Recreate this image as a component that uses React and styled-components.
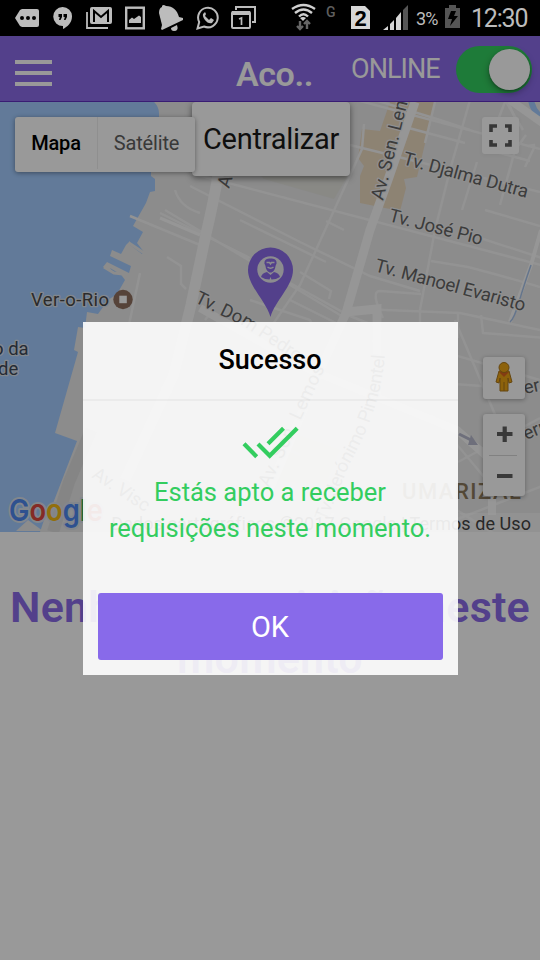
import React from 'react';
import styled, { createGlobalStyle } from 'styled-components';

const GlobalStyle = createGlobalStyle`
  * { box-sizing: border-box; }
  body { margin: 0; background: #fff; font-family: Roboto, sans-serif; overflow: hidden; }
  button { font-family: inherit; border: 0; padding: 0; margin: 0; }
`;

const Screen = styled.main`
  position: relative;
  width: 540px;
  height: 960px;
  display: flex;
  flex-direction: column;
  background: #fff;
  overflow: hidden;
`;
const StatusBar = styled.div`
  height: 36px;
  flex: none;
  display: flex;
  align-items: center;
  background: #000;
  color: #bcbcbc;
`;
const StatusIcon = styled.svg`
  display: block;
  flex: none;
  width: ${p => p.$w}px;
  height: 36px;
  margin-left: ${p => p.$gap}px;
`;
const StatusText = styled.span`
  flex: none;
  width: ${p => p.$w}px;
  margin-left: ${p => p.$gap}px;
  font-size: ${p => p.$size}px;
  line-height: 36px;
  letter-spacing: ${p => p.$ls || 0}px;
  white-space: nowrap;
  padding-top: 1px;
`;
const Page = styled.div`
  flex: 1;
  position: relative;
  display: flex;
  flex-direction: column;
`;
const Header = styled.header`
  height: 66px;
  flex: none;
  display: grid;
  grid-template-columns: 216px 120px 120px 76px;
  align-items: center;
  background: #8a6be8;
  border-bottom: 1px solid #6030c0;
  color: #fff;
`;
const MenuButton = styled.button`
  width: 37px;
  height: 26px;
  margin: 9px 0 0 15px;
  display: flex;
  flex-direction: column;
  justify-content: space-between;
  background: none;
`;
const MenuLine = styled.span`
  width: 37px;
  height: 4px;
  background: #fff;
`;
const Title = styled.h1`
  margin: 11px 0 0 20px;
  font-size: 34px;
  line-height: 40px;
  font-weight: 600;
  letter-spacing: -0.4px;
  white-space: nowrap;
`;
const OnlineLabel = styled.span`
  padding-left: 15px;
  font-size: 27px;
  line-height: 36px;
  letter-spacing: -0.95px;
`;
const Toggle = styled.div`
  width: 76px;
  height: 47px;
  padding: 3px 2px 3px 3px;
  margin-top: 1px;
  display: flex;
  justify-content: flex-end;
  border-radius: 24px;
  background: #33cd5f;
`;
const Knob = styled.span`
  width: 41px;
  height: 41px;
  border-radius: 50%;
  background: #fff;
  box-shadow: 0 3px 7px rgba(0,0,0,.35), 0 1px 2px rgba(0,0,0,.25);
`;
const MapArea = styled.section`
  position: relative;
  height: 430px;
  flex: none;
  overflow: hidden;
`;
const MapDrawing = styled.svg`
  display: block;
  width: 540px;
  height: 430px;
  font-family: Roboto, sans-serif;
`;
const CenterButton = styled.button`
  position: absolute;
  left: 192px;
  top: 0;
  width: 158px;
  height: 74px;
  border-radius: 4px;
  background: #fff;
  color: #191919;
  font-size: 29px;
  letter-spacing: -0.25px;
  box-shadow: 0 2px 6px rgba(0,0,0,.5);
`;
const MapTypes = styled.div`
  position: absolute;
  left: 15px;
  top: 15px;
  height: 55px;
  display: flex;
  border-radius: 3px;
  background: #fff;
  box-shadow: 0 1px 5px rgba(0,0,0,.4);
`;
const MapType = styled.button`
  width: ${p => (p.$active ? 82 : 98)}px;
  height: 52px;
  border-left: ${p => (p.$active ? 0 : 1)}px solid #eee;
  background: none;
  color: ${p => (p.$active ? '#000' : '#606060')};
  font-size: 20px;
  letter-spacing: -0.15px;
  font-weight: ${p => (p.$active ? 500 : 400)};
`;
const MapControl = styled.div`
  position: absolute;
  left: ${p => p.$x}px;
  top: ${p => p.$y}px;
  width: ${p => p.$w}px;
  height: ${p => p.$h}px;
  border-radius: 3px;
  background: #fff;
  box-shadow: 0 1px 4px rgba(0,0,0,${p => p.$shade || 0.3});
  svg { display: block; width: 100%; height: 100%; }
`;
const Terms = styled.div`
  position: absolute;
  right: 0;
  bottom: 0;
  height: 19px;
  padding: 0 9px 0 8px;
  background: rgba(255,255,255,.5);
  color: #444;
  font-size: 18px;
  line-height: 21px;
  letter-spacing: 0.06px;
  white-space: nowrap;
`;
const EmptyText = styled.h2`
  margin: 50px -10px 0;
  text-align: center;
  font-size: 43px;
  line-height: 51px;
  font-weight: 600;
  letter-spacing: 0.2px;
  color: #8a6be8;
`;
const Backdrop = styled.div`
  position: absolute;
  inset: 0;
  display: flex;
  align-items: flex-start;
  justify-content: center;
  padding-top: 286px;
  background: rgba(0,0,0,.4);
`;
const Popup = styled.div`
  width: 375px;
  height: 353px;
  display: flex;
  flex-direction: column;
  background: rgba(255,255,255,.9);
`;
const PopupHead = styled.h3`
  margin: 0;
  height: 79px;
  border-bottom: 2px solid rgba(0,0,0,.035);
  text-align: center;
  font-size: 27px;
  line-height: 77px;
  font-weight: 500;
  color: #000;
`;
const PopupBody = styled.div`
  height: 192px;
  padding-top: 23px;
  display: flex;
  flex-direction: column;
  align-items: center;
  color: #33cd5f;
`;
const Message = styled.p`
  margin: 14px 0 0;
  text-align: center;
  font-size: 25.5px;
  line-height: 36px;
  white-space: nowrap;
`;
const CheckIcon = styled.svg`
  width: 58px;
  height: 36px;
  flex: none;
  overflow: visible;
`;
const OkButton = styled.button`
  width: 345px;
  height: 67px;
  margin-left: 15px;
  border-radius: 3px;
  background: #886aea;
  color: #fff;
  font-size: 29px;
  line-height: 64px;
`;

const minorRoads = [
  'M190 173 L560 270', 'M330 93 L540 149', 'M350 145 L540 192', 'M190 186 L300 242 L370 276 L420 291',
  'M160 213 L250 258 M165 210 L345 318', 'M130 216 L200 245', 'M175 190 Q180 207 200 213',
  'M262 340 L300 285 L362 149 L364 124', 'M470 100 L450 170 L435 230 L420 310 L420 345',
  'M290 283 L350 316 L410 340', 'M290 300 L380 345', 'M320 345 L310 320 L250 300',
  'M240 220 L326 262', 'M300 272 L331 291 L329 299', 'M326 221 L344 230',
  'M375 100 L440 120 L470 130', 'M435 102 L425 143 M405 127 L465 143', 'M477 162 L462 210',
  'M431 261 L468 267 Q510 278 540 287', 'M485 210 L540 226', 'M480 238 L545 259',
  'M500 205 L515 150 L526 135', 'M525 167 L534 148 L534 145 L528 146', 'M505 100 L523 130 M485 149 L530 161',
  'M383 318 Q370 291 380 291 L421 294', 'M360 309 L460 313 L540 330', 'M458 312 L458 338 M481 315 L483 333 L560 339',
  'M505 102 L490 140', 'M508 102 L515 118', 'M167 257 L181 266 L181 284 L186 289',
  'M140 273 L130 320', 'M205 320 L213 310', 'M420 345 L540 380', 'M130 320 L105 430 L85 530',
  'M145 380 L300 455', 'M170 350 L330 430 L520 550', 'M145 455 L230 500', 'M250 360 L190 490',
  'M420 345 L428 410 L495 490', 'M455 320 L510 450', 'M458 462 L540 418', 'M455 520 L545 485',
  'M440 383 L540 390', 'M330 400 L430 450', 'M275 410 L235 520', 'M350 330 L365 430 L330 520'
];

const MapView = () => (
  <MapDrawing viewBox="0 102 540 430">
    <rect y="100" width="540" height="435" fill="#e9e9e9" />
    <path d="M362 129 L380 131 L390 102 L435 102 L417 177 L404 179 L406 188 L400 211 L360 203 L360 176 L364 166 L358 158Z" fill="#ecdac0" />
    <path d="M257 172 L350 172 L334 199 L264 179Z" fill="#e4e4de" />
    <path d="M290 432 L340 450 L325 485 L270 480Z" fill="#f3eadc" />
    <path d="M0 100H152Q159 106 159 113V150L151 172V176L155 179V191L150 192L146 203L133 226L143 232L137 243L144 252L142 254L130 245L130 241L126 245L121 254L112 250L110 256L131 266L129 273L107 262L103 267L112 271L110 268L120 274L119 272L125 280L117 294L108 300L98 314L87 312L85 328L78 327L74 350L78 352L55 433L77 441L52 506L44 520L40 532L0 532Z" fill="#a3ccff" />
    <path d="M28 520L43 531H16Z" fill="#e9e9e9" />
    <path d="M129 243L144 253 M104 267L114 273L123 274" fill="none" stroke="#e9e9e9" strokeWidth="3" />
    <path d="M91 430L69 482L53 532" fill="none" stroke="#dedede" strokeWidth="12" />
    <path d="M531 100Q533 111 541 117" fill="none" stroke="#a3ccff" strokeWidth="6" />
    <g fill="none" stroke="#f5f5f5" strokeWidth="2.5">
      {minorRoads.map(d => <path key={d} d={d} />)}
    </g>
    <g fill="none" stroke="#fafafa">
      <path d="M219 170 Q214 200 206 234 L191 305 L174 374 L125 480" strokeWidth="11" />
      <path d="M415 102 L388 180 L370 230 L346 313 L318 375 L265 500" strokeWidth="9" />
      <path d="M346 312 L377 309 L377 400" strokeWidth="9" />
      <path d="M510 100L545 125" strokeWidth="8" />
      <path d="M541 230L531 265 L510 322" strokeWidth="4" />
      <path d="M200 308 L310 370 L457 430 L492 461 L492 515" strokeWidth="8" />
      <path d="M160 218 L200 235" strokeWidth="3" />
    </g>
    <path d="M531 265Q524 285 519 302T510 322" fill="none" stroke="#a9c4ea" strokeWidth="1.5" />
    <path d="M459 434L473 441" stroke="#b8bacd" strokeWidth="3" />
    <path d="M471 435L478 445L468 445Z" fill="#b8bacd" />
    <g fontSize="18.5" fill="#646464" stroke="#efefef" strokeWidth="2.5" paintOrder="stroke" strokeLinejoin="round">
      <text textLength="129" transform="translate(402 164) rotate(15.2)">Tv. Djalma Dutra</text>
      <text textLength="96" transform="translate(388 221) rotate(14.5)">Tv. José Pio</text>
      <text textLength="155" transform="translate(374 271) rotate(15)">Tv. Manoel Evaristo</text>
      <text textLength="108" transform="translate(383 201) rotate(-76)">Av. Sen. Lem</text>
      <text transform="translate(229 189) rotate(-72)">Av. Dr. Freitas</text>
      <path id="dom" d="M194 302 L245 327 L330 384" fill="none" stroke="none" />
      <text><textPath href="#dom">Tv. Dom Pedro I</textPath></text>
      <text textLength="132" transform="translate(269 488) rotate(-65)">Av. Sen. Lemos</text>
      <path id="jeronimo" d="M326 522 L350 463 Q383 405 385 350" fill="none" stroke="none" />
      <text><textPath href="#jeronimo" textLength="178">Tv. Jerónimo Pimentel</textPath></text>
      <text transform="translate(91 477) rotate(33)">Av. Visc</text>
      <text transform="translate(525 394) rotate(-12)">ern</text>
      <text transform="translate(526 440) rotate(-22)">ern</text>
    </g>
    <text x="402" y="499" textLength="119" fontSize="22" fontWeight="500" fill="#8b795c">UMARIZAL</text>
    <g fontSize="18.5" fill="#3c4859" stroke="#d9e1eb" strokeWidth="2.5" paintOrder="stroke" strokeLinejoin="round">
      <text x="31" y="306" textLength="78" fill="#484848">Ver-o-Rio</text>
      <text x="-7" y="355">o da</text>
      <text x="-2" y="375">de</text>
    </g>
    <circle cx="123" cy="299.5" r="9.700" fill="#90705f" />
    <rect x="119.3" y="295.7" width="7.5" height="7.5" fill="#fff" />
    <g fontFamily="Inter, sans-serif" fontSize="30" fontWeight="600" stroke="#d9e1eb" strokeWidth="4" paintOrder="stroke" strokeLinejoin="round">
      <text x="9" y="521" textLength="94" lengthAdjust="spacingAndGlyphs">
        <tspan fill="#4d87ef">G</tspan><tspan fill="#dd493e">o</tspan><tspan fill="#f3b914">o</tspan><tspan fill="#4d87ef">g</tspan><tspan fill="#38a85a">l</tspan><tspan fill="#dd493e">e</tspan>
      </text>
    </g>
    <path d="M270.5 317C266 301 248 286 248 270A22.5 22.5 0 0 1 293 270C293 286 275 301 270.5 317Z" fill="#8a6be8" />
    <circle cx="270.5" cy="269.500" r="13.2" fill="#e9e9ef" />
    <g fill="#8a6be8">
      <path d="M264.5 263.500C264 259.500 267 258.500 270.5 258.500S277 259.500 276.500 263.500L275.500 266H265.500Z" />
      <path d="M265.500 266H275.500C275 270 273 272.500 270.5 272.500S266 270 265.500 266Z" />
      <path d="M261 277Q262 273 267 272L270.5 275L274 272Q279 273 280 277Q276 279.500 271.500 279.500L270.500 277L269.500 279.500Q265 279.500 261 277Z" />
    </g>
    <path d="M266.500 262.500H269.500L270.500 264L271.500 262.500H274.500M267.500 267Q270.500 269.500 273.500 267" fill="none" stroke="#e9e9ef" strokeWidth="1.4" />
  </MapDrawing>
);

const StatusIcons = () => (
  <StatusBar>
    <StatusIcon $w={24} $gap={15} viewBox="0 0 24 36"><path fill="#bcbcbc" d="M7 9H22Q24 9 24 11V25Q24 27 22 27H7L5 26L0 18L5 10Z" /><path d="M7 18h0M13 18h0M19 18h0" stroke="#000" strokeWidth="4" strokeLinecap="round" /></StatusIcon>
    <StatusIcon $w={19} $gap={14} viewBox="0 0 19 36"><path fill="#bcbcbc" d="M9.5 7A9.3 9.3 0 0 1 19 16.5C19 23 14 27 10 29V26A9.5 9.5 0 0 1 9.5 7Z" /><path fill="#000" d="M5.5 14H9V17L7.5 20H6L6.8 17H5.5ZM10.5 14H14V17L12.5 20H11L11.8 17H10.5Z" /></StatusIcon>
    <StatusIcon $w={26} $gap={14} viewBox="0 0 26 36"><path fill="none" stroke="#bcbcbc" strokeWidth="1.8" d="M1 12V28H22" /><rect x="4" y="7" width="22" height="17" rx="2" fill="#bcbcbc" /><path d="M8 22V11L15 17L22 11V22" fill="none" stroke="#000" strokeWidth="2" /></StatusIcon>
    <StatusIcon $w={20} $gap={13} viewBox="0 0 20 36"><rect x="1.2" y="7.700" width="17.600" height="20.600" stroke="#bcbcbc" strokeWidth="2.4" fill="#000" /><path d="M4 23V20L7 17.500L9 19L14 15.500L16 17V23Z" fill="#bcbcbc" /></StatusIcon>
    <StatusIcon $w={24} $gap={14} viewBox="0 0 24 36"><path fill="#bcbcbc" d="M3 6Q4 4 7 6C14 6 18 10 20 17L24 18V20L3 30L2 29L3 25L0 13Q0 8 3 7ZM12 28L18 25Q20 31 15 31Q12 31 12 28Z" /></StatusIcon>
    <StatusIcon $w={23} $gap={13} viewBox="0 0 23 36"><path d="M1.500 28.500L3.200 22A9.8 9.8 0 1 1 8 26.500Z" fill="none" stroke="#bcbcbc" strokeWidth="2" /><path d="M9 12L7 14C6 18 12 25 16 23L18 20L15 18L13 20L9 16L10 14Z" fill="#bcbcbc" /></StatusIcon>
    <StatusIcon $w={25} $gap={12} viewBox="0 0 25 36"><path d="M5 10V7H24V22H21" fill="none" stroke="#bcbcbc" strokeWidth="2" /><rect x="1" y="12" width="18" height="16" rx="1" fill="none" stroke="#bcbcbc" strokeWidth="2" /><path d="M1 13H19" stroke="#bcbcbc" strokeWidth="4" /><path d="M8 19L10.5 18V25" fill="none" stroke="#bcbcbc" strokeWidth="1.7" /></StatusIcon>
    <StatusIcon $w={25} $gap={35} viewBox="0 0 25 36"><g fill="none" stroke="#d0d0d0" strokeWidth="2.4"><path d="M1 9Q12.5 1 24 9M4 13Q12.5 6 21 13M8 16.5Q12.5 12 17 16.5" /></g><path fill="#d0d0d0" d="M9 18Q12 16 15 18L12 21Z" /><path d="M9 21V28M6 26L9 29L12 26M16 29V22M13 24L16 21L19 24" fill="none" stroke="#666" strokeWidth="2.4" /></StatusIcon>
    <StatusIcon $w={10} $gap={10} viewBox="0 0 10 36"><text x="0" y="16.500" fontSize="14" fontWeight="500" textLength="9" fill="#5e5e5e" fontFamily="Roboto">G</text></StatusIcon>
    <StatusIcon $w={19} $gap={15} viewBox="0 0 19 36"><path fill="#d6d6d6" d="M0 6H14L19 11V29H0Z" /><text x="9.5" y="26" textAnchor="middle" fontSize="22" fontWeight="600" fontFamily="Liberation Sans">2</text></StatusIcon>
    <StatusIcon $w={25} $gap={13} viewBox="0 0 25 36"><path fill="#d6d6d6" d="M0 30L5 26V30ZM7 24L11 20V30H7ZM13 18L18 12V30H13Z" /><path fill="#555" d="M20 10L25 5V30H20Z" /></StatusIcon>
    <StatusText $w={24} $gap={8} $size={18} $ls={-0.8}>3%</StatusText>
    <StatusIcon $w={15} $gap={5} viewBox="0 0 15 36"><path fill="#555" d="M4 5H11V8H15V28H0V8H4Z" /><path fill="#000" d="M6 11H11L9 16H13L5 26L7 19H3Z" /></StatusIcon>
    <StatusText $w={60} $gap={11} $size={25} $ls={-1.2}>12:30</StatusText>
  </StatusBar>
);

export default function App() {
  return (
    <Screen>
      <GlobalStyle />
      <StatusIcons />
      <Page>
        <Header>
          <MenuButton aria-label="Menu"><MenuLine /><MenuLine /><MenuLine /></MenuButton>
          <Title>Aco..</Title>
          <OnlineLabel>ONLINE</OnlineLabel>
          <Toggle><Knob /></Toggle>
        </Header>
        <MapArea>
          <MapView />
          <CenterButton>Centralizar</CenterButton>
          <MapTypes><MapType $active>Mapa</MapType><MapType>Satélite</MapType></MapTypes>
          <MapControl $x={482} $y={15} $w={37} $h={37} $shade={0.05}>
            <svg viewBox="0 0 37 37"><path d="M9 15V9H15M23 9H28V15M28 23V28H23M15 28H9V23" fill="none" stroke="#5c5c5c" strokeWidth="3.600" /></svg>
          </MapControl>
          <MapControl $x={483} $y={255} $w={42} $h={42}>
            <svg viewBox="0 0 42 42"><path d="M16 14H26L29 25L26 26L25 21V34H17V21L16 26L13 25Z" fill="#eba313" stroke="#a9751a" strokeWidth="1" /><path d="M16 15H26L21 20Z" fill="#db651e" /><circle cx="21" cy="10.5" r="5" fill="#eba313" stroke="#a9751a" /><path d="M21 25V34" stroke="#a9751a" /></svg>
          </MapControl>
          <MapControl $x={483} $y={312} $w={42} $h={82}>
            <svg viewBox="0 0 42 82"><path d="M14 20H29.500M21.700 12.500V28M14 62H29.500" stroke="#606060" strokeWidth="4.200" /><path d="M6 41.500H34" stroke="#d8d8d8" /></svg>
          </MapControl>
          <Terms>Dados cartográficos ©2017 Google | Termos de Uso</Terms>
        </MapArea>
        <EmptyText>Nenhuma requisição neste momento</EmptyText>
        <Backdrop>
          <Popup role="dialog">
            <PopupHead>Sucesso</PopupHead>
            <PopupBody>
              <CheckIcon viewBox="0 0 58 36"><path d="M3 19.700L15.700 32.700M17 20L28.700 31.700L56.200 4.300M27 19.700L42.500 4.300" fill="none" stroke="#33cd5f" strokeWidth="4.200" /></CheckIcon>
              <Message>Estás apto a receber<br />requisições neste momento.</Message>
            </PopupBody>
            <OkButton>OK</OkButton>
          </Popup>
        </Backdrop>
      </Page>
    </Screen>
  );
}
